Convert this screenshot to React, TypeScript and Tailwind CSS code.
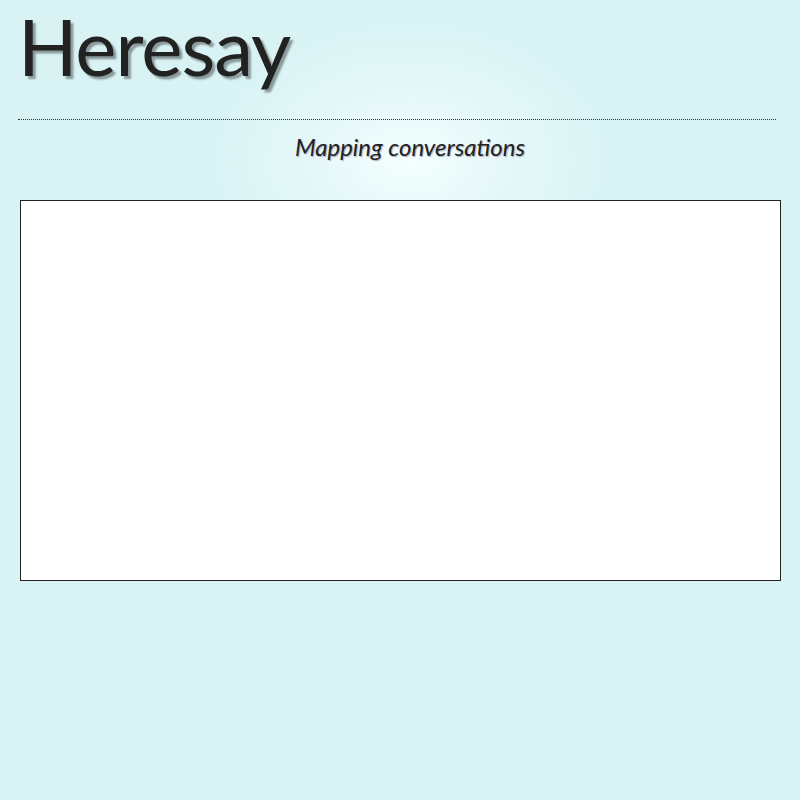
export default function App() {
  return (
    <div className="min-h-[800px] w-full bg-[#d9f3f4] bg-[radial-gradient(ellipse_200px_140px_at_410px_160px,#f4ffff_0%,#e6f8f9_45%,#d9f3f4_100%)] font-['Lato','Noto_Sans',sans-serif] text-[#222]">
      <header className="px-[18px]">
        <h1 className="text-[78px] leading-[92px] tracking-[-1px] [text-shadow:3px_3px_2px_#8a9a9c]">Heresay</h1>
        <div className="mt-[27px] mr-[6px] border-b border-dotted border-[#333]" />
        <p className="mt-[12px] text-center pl-[20px] text-[24px] italic leading-[30px] [text-shadow:1px_1px_1px_#aab]">
          Mapping conversations
        </p>
      </header>
      <main className="mt-[38px] px-[20px] pr-[19px]">
        <div className="h-[381px] border border-[#222] bg-white" />
      </main>
    </div>
  );
}
